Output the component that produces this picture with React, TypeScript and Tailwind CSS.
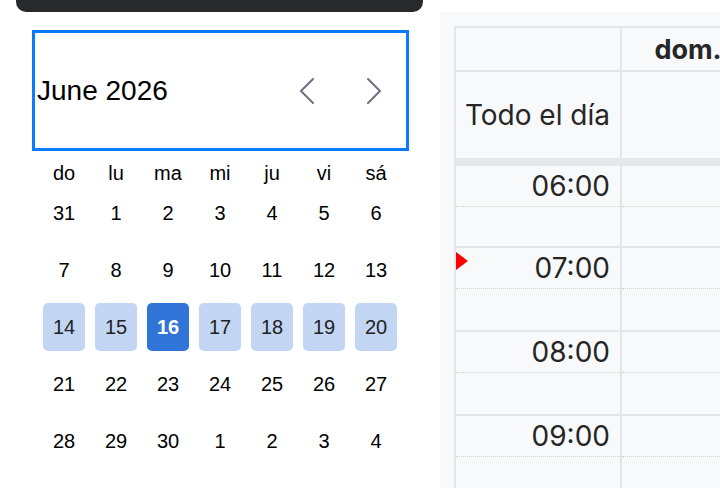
import { useState } from "react";

const weekdays = ["do", "lu", "ma", "mi", "ju", "vi", "sá"];

const weeks: number[][] = [
  [31, 1, 2, 3, 4, 5, 6],
  [7, 8, 9, 10, 11, 12, 13],
  [14, 15, 16, 17, 18, 19, 20],
  [21, 22, 23, 24, 25, 26, 27],
  [28, 29, 30, 1, 2, 3, 4],
];

const hours = ["06:00", "07:00", "08:00", "09:00"];

function Chevron({ dir }: { dir: "left" | "right" }) {
  return (
    <svg width="14" height="26" viewBox="0 0 14 26" fill="none">
      <polyline
        points={dir === "left" ? "13,1 1,13 13,25" : "1,1 13,13 1,25"}
        stroke="#6b7280"
        strokeWidth="2"
        strokeLinecap="round"
        strokeLinejoin="round"
      />
    </svg>
  );
}

function MiniCalendar() {
  const [selected, setSelected] = useState<number>(16);

  return (
    <div className="w-[440px] shrink-0 font-['Liberation_Sans',Arial,sans-serif]">
      <div className="mx-[16px] h-[12px] w-[407px] rounded-b-[10px] bg-[#28292c]" />
      <div className="ml-[32px] mt-[18px] flex h-[121px] w-[377px] items-center border-[3px] border-[#0a7aff] pl-[2px] pr-[12px]">
        <span className="text-[28px] leading-none text-black">June 2026</span>
        <div className="ml-auto flex items-center gap-[27px]">
          <button className="flex h-[40px] w-[40px] items-center justify-center">
            <Chevron dir="left" />
          </button>
          <button className="flex h-[40px] w-[40px] items-center justify-center">
            <Chevron dir="right" />
          </button>
        </div>
      </div>

      <div className="ml-[43px] mt-[9px] grid w-[402px] grid-cols-[repeat(7,42px)] gap-x-[10px]">
        {weekdays.map((d) => (
          <div key={d} className="flex h-[26px] items-center justify-center text-[20px] text-black">
            {d}
          </div>
        ))}
      </div>

      <div className="ml-[43px] mt-[3px] grid grid-cols-[repeat(7,42px)] gap-x-[10px] gap-y-[9px]">
        {weeks.map((week, wi) =>
          week.map((day, di) => {
            const inWeek = wi === 2;
            const isSel = inWeek && day === selected;
            return (
              <button
                key={`${wi}-${di}`}
                onClick={() => inWeek && setSelected(day)}
                className={`flex h-[48px] items-center justify-center rounded-[5px] text-[20px] ${
                  isSel
                    ? "bg-[#3174d8] font-bold text-white"
                    : inWeek
                    ? "bg-[#c2d6f4] text-[#222]"
                    : "text-black"
                }`}
              >
                {day}
              </button>
            );
          })
        )}
      </div>
    </div>
  );
}

function WeekGrid() {
  return (
    <div className="mt-[12px] flex-1 overflow-hidden bg-[#f8f9fb] pl-[14px] pt-[14px] font-['Inter',sans-serif] text-[#262626]">
      <div className="relative w-[300px] border-l-2 border-t-2 border-[#e3e5ea]">
        {/* day header */}
        <div className="flex h-[44px] border-b-2 border-[#e3e5ea]">
          <div className="w-[166px] shrink-0 border-r-2 border-[#e3e5ea]" />
          <div className="flex w-[132px] shrink-0 items-center justify-center text-[27px] font-bold leading-none">
            dom.
          </div>
        </div>

        {/* all-day row */}
        <div className="flex h-[86px]">
          <div className="flex w-[166px] shrink-0 items-center justify-end border-r-2 border-[#e3e5ea] pr-[10px] text-[28px] leading-none">
            Todo el día
          </div>
          <div className="w-[132px] shrink-0" />
        </div>
        <div className="h-[8px] bg-[#e5e7eb]" />

        {/* hour slots */}
        {hours.map((h, i) => (
          <div
            key={h}
            className={`flex border-b-2 border-[#e3e5ea] ${i === 0 ? "h-[82px]" : "h-[84px]"}`}
          >
            <div className="w-[166px] shrink-0 border-r-2 border-[#e3e5ea]">
              <div className="flex h-[41px] justify-end border-b border-dotted border-[#cfd2d8] pr-[10px] pt-[6px] text-[28px] leading-[28px]">
                {h}
              </div>
            </div>
            <div className="w-[132px] shrink-0">
              <div className="h-[41px] border-b border-dotted border-[#cfd2d8]" />
            </div>
          </div>
        ))}

        {/* current time marker */}
        <div className="absolute left-0 top-[224px] h-0 w-0 border-y-[9px] border-l-[12px] border-y-transparent border-l-[#ff0000]" />
      </div>
    </div>
  );
}

export default function App() {
  return (
    <div className="flex h-[488px] w-[720px] overflow-hidden bg-white">
      <MiniCalendar />
      <WeekGrid />
    </div>
  );
}
